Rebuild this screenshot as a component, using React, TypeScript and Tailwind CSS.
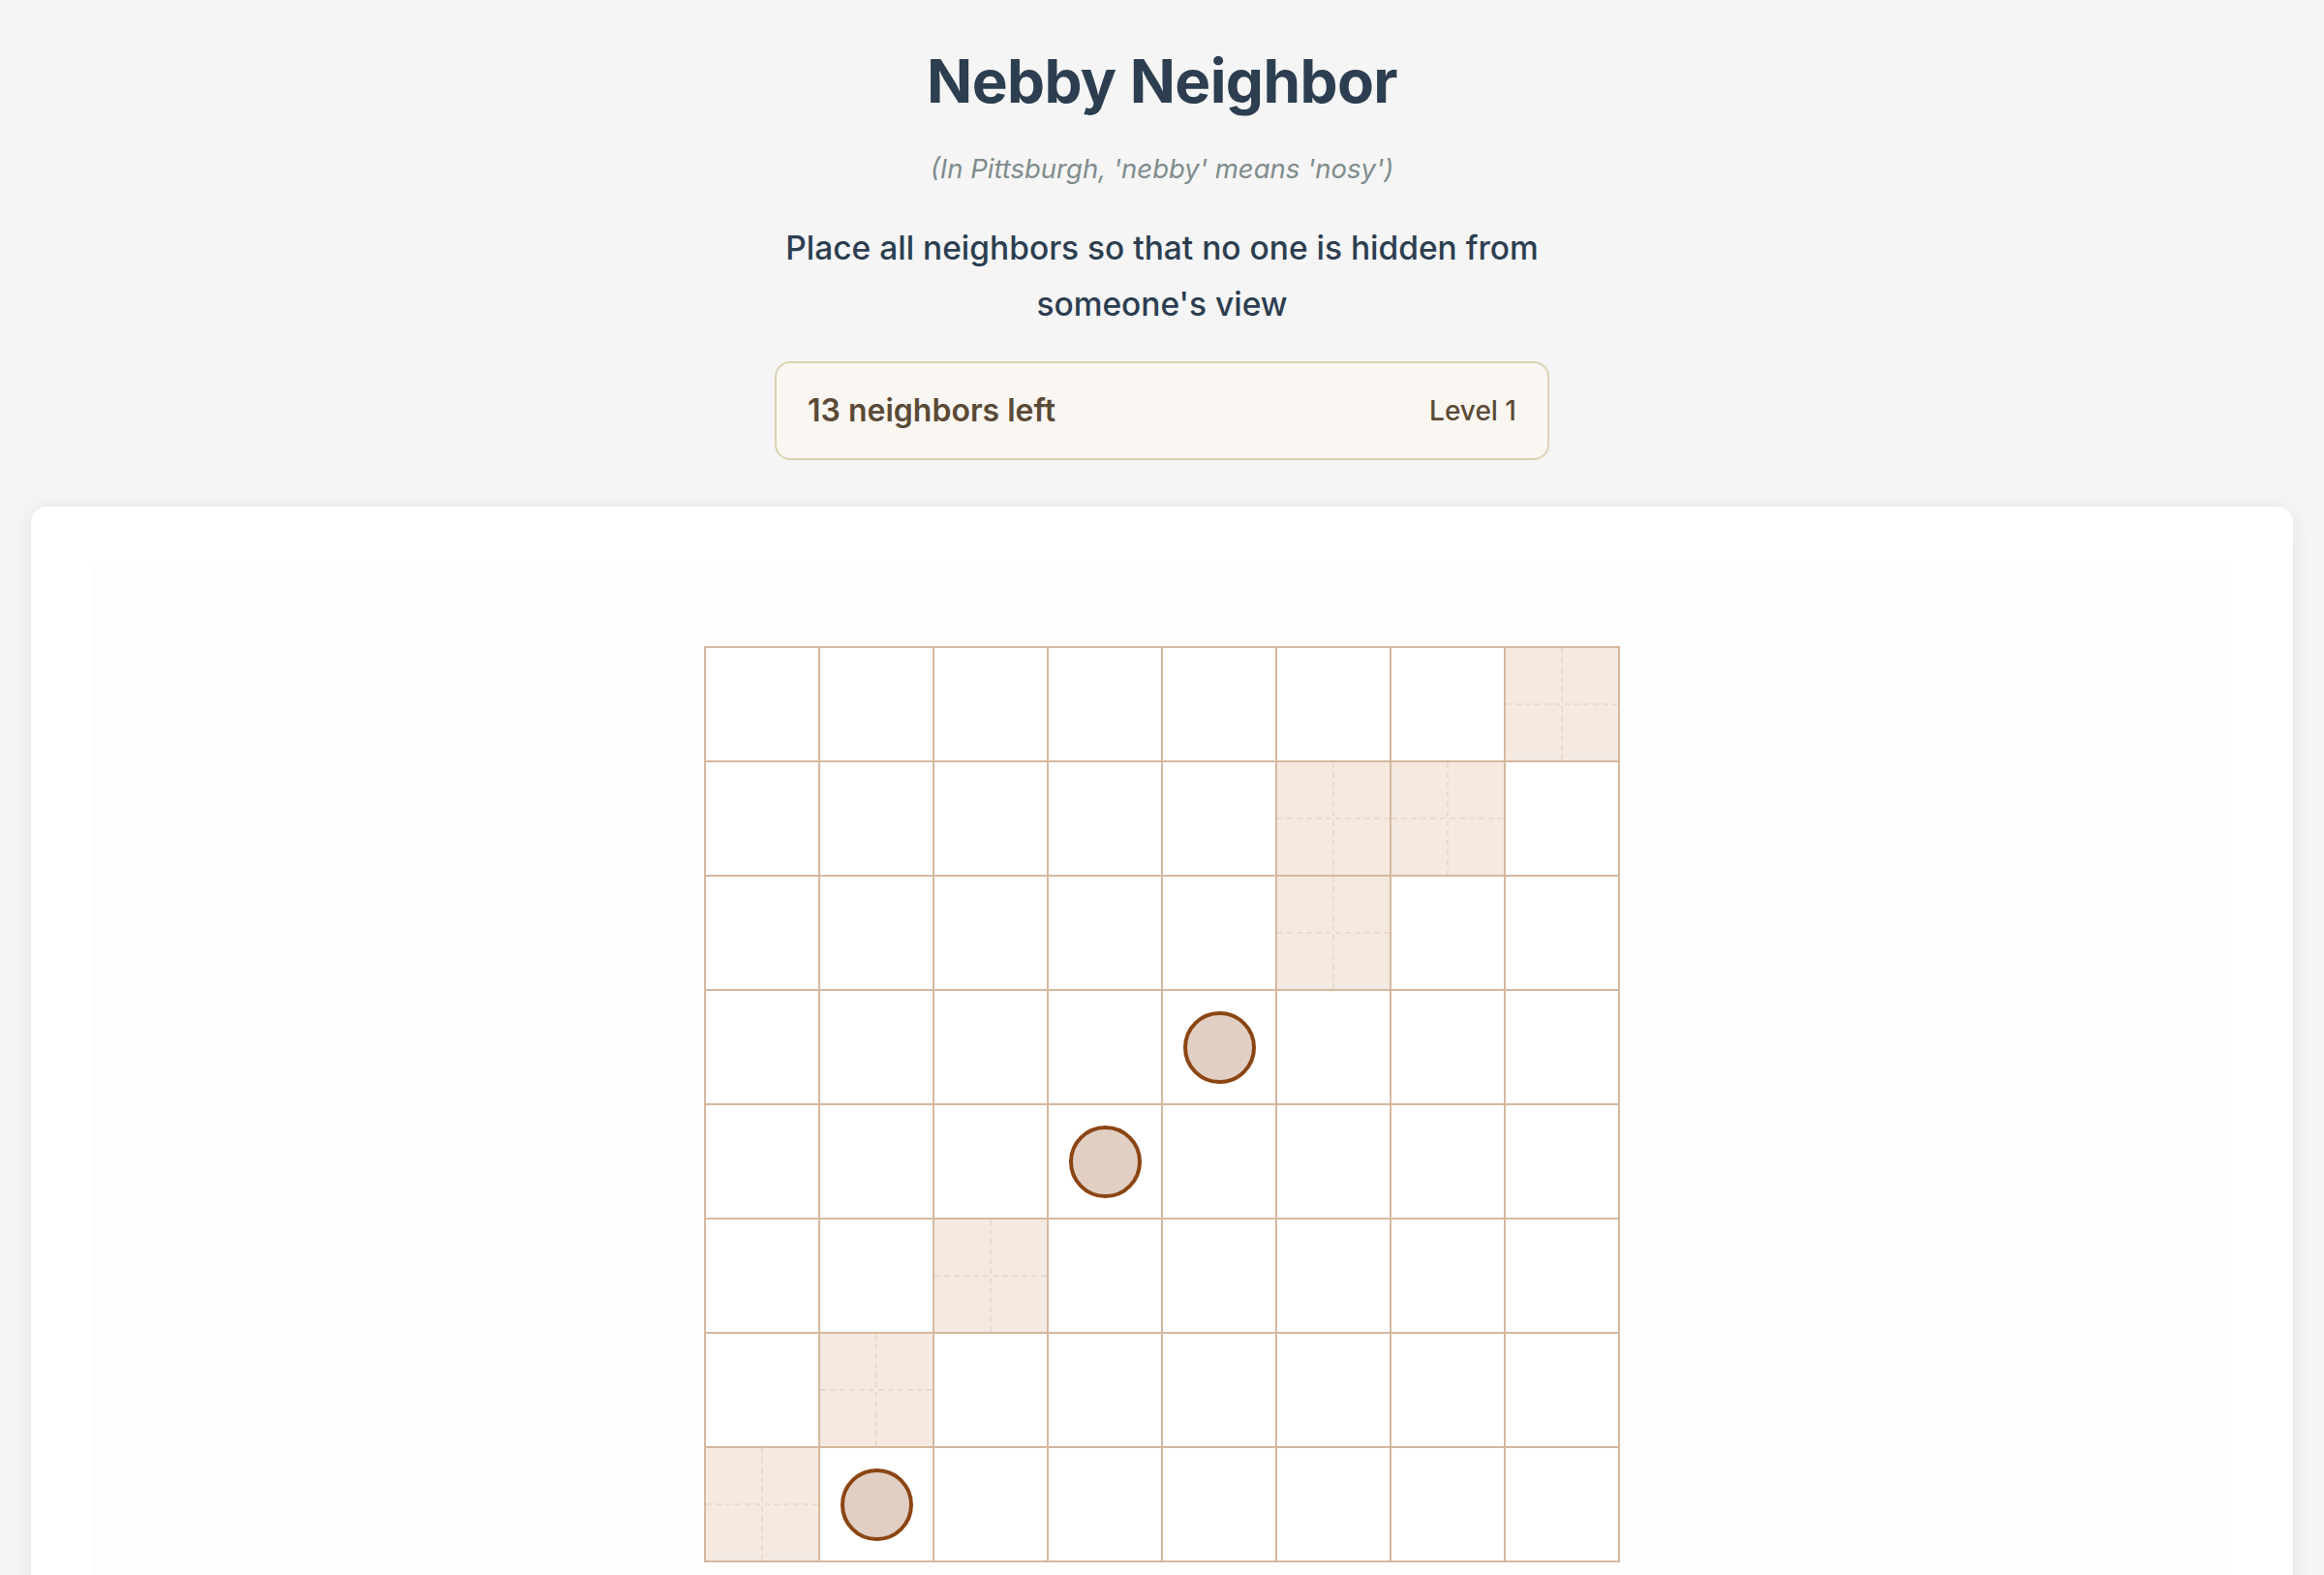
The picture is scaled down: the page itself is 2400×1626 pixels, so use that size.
import { useMemo } from 'react';

const SIZE = 8;
const shaded = ['7,0', '5,1', '6,1', '5,2', '2,5', '1,6', '0,7'];
const neighbors = ['4,3', '3,4', '1,7'];

function Cell({ col, row }: { col: number; row: number }) {
  const key = `${col},${row}`;
  const isShaded = shaded.includes(key);
  const hasNeighbor = neighbors.includes(key);

  return (
    <div
      className={`relative flex h-[116px] w-[116px] items-center justify-center ${
        isShaded ? 'bg-[#f4eae2]' : 'bg-white'
      }`}
    >
      {isShaded && (
        <>
          <div className="absolute left-0 right-0 top-1/2 -translate-y-1/2 border-t-2 border-dashed border-[#eadbd0]" />
          <div className="absolute bottom-0 top-0 left-1/2 -translate-x-1/2 border-l-2 border-dashed border-[#eadbd0]" />
        </>
      )}
      {hasNeighbor && (
        <div className="h-[75px] w-[75px] rounded-full border-4 border-[#8b4513] bg-[#e1cfc4]" />
      )}
    </div>
  );
}

export default function App() {
  const cells = useMemo(() => {
    const list: { col: number; row: number }[] = [];
    for (let row = 0; row < SIZE; row++) {
      for (let col = 0; col < SIZE; col++) list.push({ col, row });
    }
    return list;
  }, []);

  return (
    <div className="min-h-screen bg-[#f5f5f5] font-['Inter','Noto_Sans',sans-serif]">
      <header className="flex flex-col items-center pt-[42px] text-center">
        <h1 className="text-[62px] font-bold leading-[84px] tracking-[-0.6px] text-[#2c3e50]">
          Nebby Neighbor
        </h1>
        <p className="mt-[28px] text-[27.5px] italic leading-[40px] text-[#7f8c8d]">
          (In Pittsburgh, 'nebby' means 'nosy')
        </p>
        <p className="mt-[33px] max-w-[800px] text-[33.5px] font-medium leading-[58px] text-[#2c3e50]">
          Place all neighbors so that no one is hidden from someone's view
        </p>
        <div className="mt-[30px] flex h-[102px] w-[800px] items-center justify-between rounded-[16px] border-2 border-[#dcd1b2] bg-[#faf7f2] px-[32px] text-[#5a4a36]">
          <span className="text-[32px] font-semibold">13 neighbors left</span>
          <span className="text-[28px] font-medium">Level 1</span>
        </div>
      </header>

      <main className="mx-[32px] mt-[48px] rounded-[16px] bg-white px-[64px] pt-[60px] shadow-[0_2px_20px_rgba(0,0,0,0.08)]">
        <div className="flex justify-center bg-[#fdfdfd] pb-[80px] pt-[84px]">
          <div className="grid grid-cols-8 gap-[2px] bg-[#d5b89e] p-[2px]">
            {cells.map((c) => (
              <Cell key={`${c.col}-${c.row}`} col={c.col} row={c.row} />
            ))}
          </div>
        </div>
      </main>
    </div>
  );
}
